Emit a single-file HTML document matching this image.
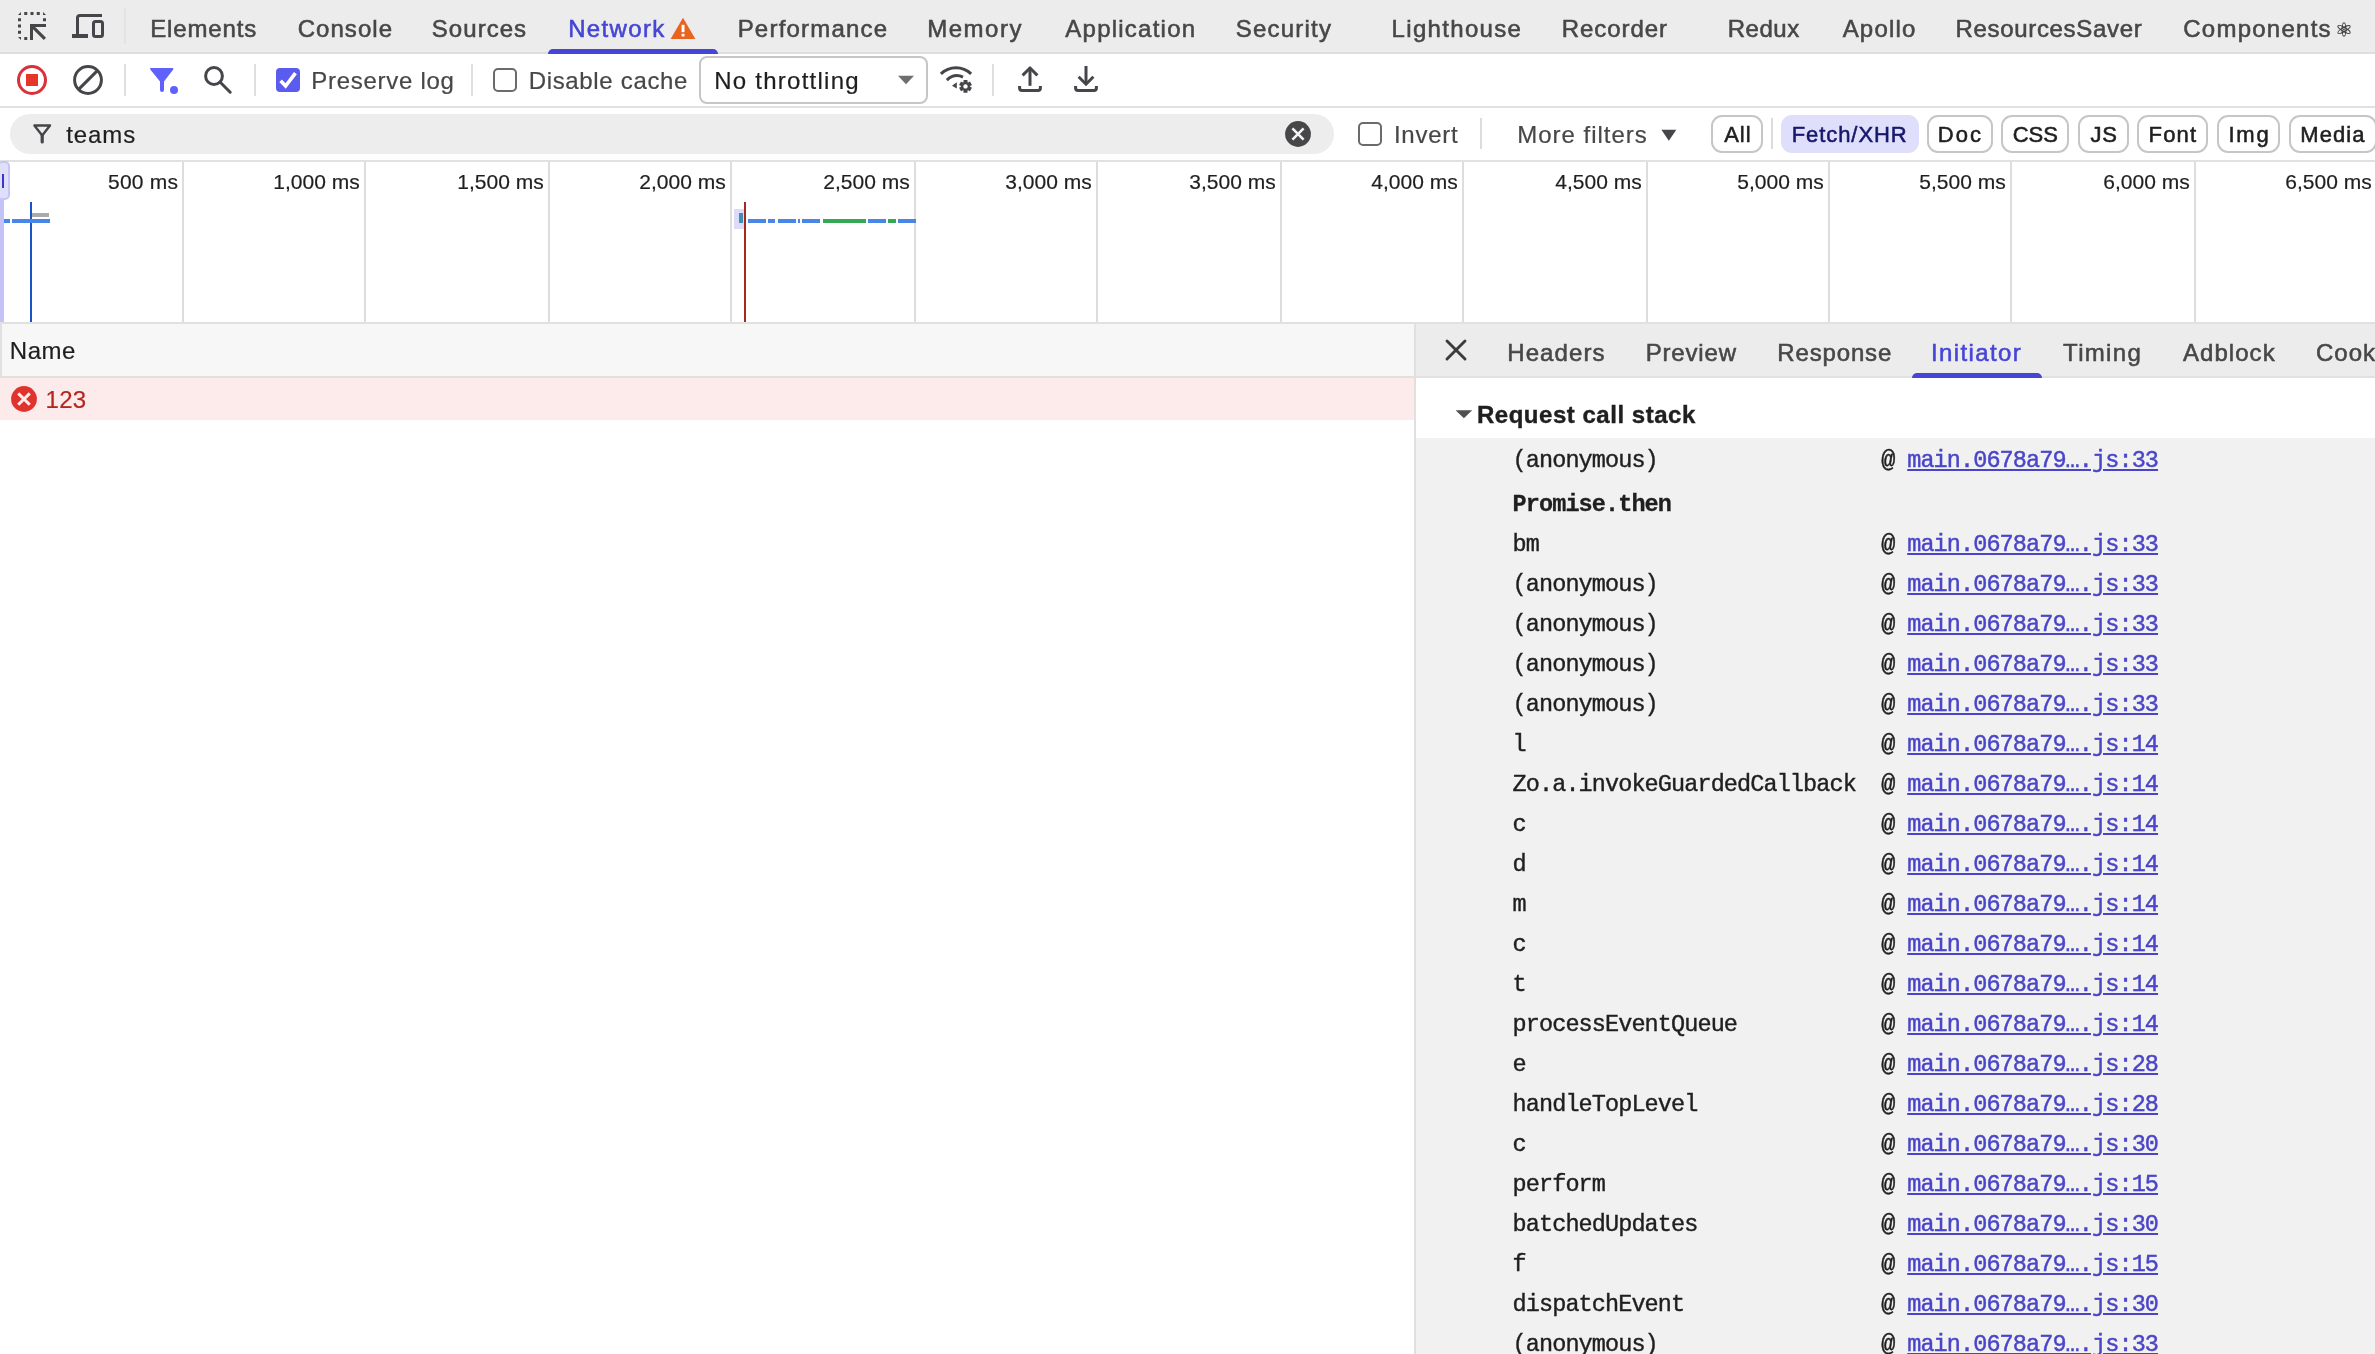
<!DOCTYPE html>
<html><head><meta charset="utf-8"><title>DevTools</title>
<style>
html,body{margin:0;padding:0;background:#fff;}
body{width:2375px;height:1354px;overflow:hidden;position:relative;font-family:"Liberation Sans",sans-serif;}
#root{position:absolute;left:0;top:0;width:2375px;height:1354px;overflow:hidden;will-change:transform;}
.t{position:absolute;white-space:pre;line-height:1;}
.b{position:absolute;box-sizing:border-box;}
a.t{text-decoration:none;}
</style></head><body><div id="root">
<div class="b" style="left:0px;top:0px;width:2375px;height:52px;background:#ececec;"></div>
<div class="b" style="left:0px;top:52px;width:2375px;height:2px;background:#dedede;"></div>
<div class="b" style="left:0px;top:106px;width:2375px;height:2px;background:#e1e1e1;"></div>
<div class="b" style="left:0px;top:160px;width:2375px;height:2px;background:#e1e1e1;"></div>
<span class="t" style="left:150.15px;top:17.00px;font-size:24px;color:#474747;letter-spacing:0.871px;-webkit-text-stroke:0.55px #474747;">Elements</span>
<span class="t" style="left:297.70px;top:17.00px;font-size:24px;color:#474747;letter-spacing:1.042px;-webkit-text-stroke:0.55px #474747;">Console</span>
<span class="t" style="left:431.80px;top:17.00px;font-size:24px;color:#474747;letter-spacing:1.042px;-webkit-text-stroke:0.55px #474747;">Sources</span>
<span class="t" style="left:737.65px;top:17.00px;font-size:24px;color:#474747;letter-spacing:1.215px;-webkit-text-stroke:0.55px #474747;">Performance</span>
<span class="t" style="left:927.25px;top:17.00px;font-size:24px;color:#474747;letter-spacing:1.500px;-webkit-text-stroke:0.55px #474747;">Memory</span>
<span class="t" style="left:1065.30px;top:17.00px;font-size:24px;color:#474747;letter-spacing:1.240px;-webkit-text-stroke:0.55px #474747;">Application</span>
<span class="t" style="left:1235.80px;top:17.00px;font-size:24px;color:#474747;letter-spacing:1.207px;-webkit-text-stroke:0.55px #474747;">Security</span>
<span class="t" style="left:1391.55px;top:17.00px;font-size:24px;color:#474747;letter-spacing:1.328px;-webkit-text-stroke:0.55px #474747;">Lighthouse</span>
<span class="t" style="left:1561.85px;top:17.00px;font-size:24px;color:#474747;letter-spacing:0.907px;-webkit-text-stroke:0.55px #474747;">Recorder</span>
<span class="t" style="left:1727.75px;top:17.00px;font-size:24px;color:#474747;letter-spacing:0.500px;-webkit-text-stroke:0.55px #474747;">Redux</span>
<span class="t" style="left:1842.70px;top:17.00px;font-size:24px;color:#474747;letter-spacing:1.170px;-webkit-text-stroke:0.55px #474747;">Apollo</span>
<span class="t" style="left:1955.55px;top:17.00px;font-size:24px;color:#474747;letter-spacing:0.669px;-webkit-text-stroke:0.55px #474747;">ResourcesSaver</span>
<span class="t" style="left:2183.20px;top:17.00px;font-size:24px;color:#474747;letter-spacing:1.261px;-webkit-text-stroke:0.55px #474747;">Components</span>
<span class="t" style="left:568.15px;top:17.00px;font-size:24px;color:#4545d6;letter-spacing:1.367px;-webkit-text-stroke:0.55px #4545d6;">Network</span>
<div class="b" style="left:548px;top:49px;width:170px;height:5px;background:#4545d6;border-radius:5px 5px 0 0;"></div>
<div class="b" style="left:124px;top:8px;width:2px;height:36px;background:#e3e3e3;"></div>
<div class="b" style="left:124px;top:64px;width:2px;height:32px;background:#dfdfdf;"></div>
<div class="b" style="left:254px;top:64px;width:2px;height:32px;background:#dfdfdf;"></div>
<div class="b" style="left:471px;top:64px;width:2px;height:32px;background:#dfdfdf;"></div>
<div class="b" style="left:992px;top:64px;width:2px;height:32px;background:#dfdfdf;"></div>
<span class="t" style="left:311.35px;top:69.00px;font-size:24px;color:#474747;letter-spacing:0.714px;-webkit-text-stroke:0.2px #474747;">Preserve log</span>
<span class="t" style="left:528.65px;top:69.00px;font-size:24px;color:#474747;letter-spacing:0.671px;-webkit-text-stroke:0.2px #474747;">Disable cache</span>
<div class="b" style="left:699px;top:56px;width:229px;height:48px;background:#fff;border:2px solid #c6c6c6;border-radius:8px;"></div>
<span class="t" style="left:714.25px;top:69.00px;font-size:24px;color:#1f1f1f;letter-spacing:1.246px;-webkit-text-stroke:0.2px #1f1f1f;">No throttling</span>
<div class="b" style="left:276px;top:68px;width:24px;height:24px;background:#5b5bf0;border-radius:4px;"></div>
<div class="b" style="left:493px;top:68px;width:24px;height:24px;background:#fff;border:2px solid #6b6b6b;border-radius:5px;"></div>
<div class="b" style="left:10px;top:114px;width:1324px;height:40px;background:#ededed;border-radius:20px;"></div>
<span class="t" style="left:66.15px;top:123.00px;font-size:24px;color:#1f1f1f;letter-spacing:0.938px;-webkit-text-stroke:0.2px #1f1f1f;">teams</span>
<div class="b" style="left:1357.5px;top:122px;width:24px;height:24px;background:#fff;border:2px solid #6b6b6b;border-radius:5px;"></div>
<span class="t" style="left:1393.90px;top:123.00px;font-size:24px;color:#474747;letter-spacing:0.750px;-webkit-text-stroke:0.2px #474747;">Invert</span>
<div class="b" style="left:1480px;top:118px;width:2px;height:31px;background:#dcdcdc;"></div>
<span class="t" style="left:1517.25px;top:123.00px;font-size:24px;color:#474747;letter-spacing:0.977px;-webkit-text-stroke:0.2px #474747;">More filters</span>
<div class="b" style="left:1771px;top:118px;width:2px;height:31px;background:#dcdcdc;"></div>
<div class="b" style="left:1711.4px;top:115px;width:51.19999999999982px;height:38px;background:#fff;border:2px solid #c6c6c6;border-radius:11px;"></div>
<span class="t" style="left:1724.20px;top:124.00px;font-size:22px;color:#1f1f1f;letter-spacing:1.000px;-webkit-text-stroke:0.55px #1f1f1f;">All</span>
<div class="b" style="left:1927.3px;top:115px;width:65.5px;height:38px;background:#fff;border:2px solid #c6c6c6;border-radius:11px;"></div>
<span class="t" style="left:1937.75px;top:124.00px;font-size:22px;color:#1f1f1f;letter-spacing:2.025px;-webkit-text-stroke:0.55px #1f1f1f;">Doc</span>
<div class="b" style="left:2001.3px;top:115px;width:68.10000000000014px;height:38px;background:#fff;border:2px solid #c6c6c6;border-radius:11px;"></div>
<span class="t" style="left:2012.80px;top:124.00px;font-size:22px;color:#1f1f1f;letter-spacing:-0.075px;-webkit-text-stroke:0.55px #1f1f1f;">CSS</span>
<div class="b" style="left:2078.3px;top:115px;width:50.29999999999973px;height:38px;background:#fff;border:2px solid #c6c6c6;border-radius:11px;"></div>
<span class="t" style="left:2090.55px;top:124.00px;font-size:22px;color:#1f1f1f;letter-spacing:0.800px;-webkit-text-stroke:0.55px #1f1f1f;">JS</span>
<div class="b" style="left:2137.2px;top:115px;width:71.20000000000027px;height:38px;background:#fff;border:2px solid #c6c6c6;border-radius:11px;"></div>
<span class="t" style="left:2148.45px;top:124.00px;font-size:22px;color:#1f1f1f;letter-spacing:1.250px;-webkit-text-stroke:0.55px #1f1f1f;">Font</span>
<div class="b" style="left:2217.3px;top:115px;width:62.899999999999636px;height:38px;background:#fff;border:2px solid #c6c6c6;border-radius:11px;"></div>
<span class="t" style="left:2228.40px;top:124.00px;font-size:22px;color:#1f1f1f;letter-spacing:1.800px;-webkit-text-stroke:0.55px #1f1f1f;">Img</span>
<div class="b" style="left:2289.1px;top:115px;width:88.40000000000009px;height:38px;background:#fff;border:2px solid #c6c6c6;border-radius:11px;"></div>
<span class="t" style="left:2300.25px;top:124.00px;font-size:22px;color:#1f1f1f;letter-spacing:1.062px;-webkit-text-stroke:0.55px #1f1f1f;">Media</span>
<div class="b" style="left:1781px;top:115px;width:138px;height:38px;background:#dfdffb;border-radius:11px;"></div>
<span class="t" style="left:1791.65px;top:124.00px;font-size:22px;color:#17176b;letter-spacing:0.938px;-webkit-text-stroke:0.55px #17176b;">Fetch/XHR</span>
<div class="b" style="left:182px;top:162px;width:2px;height:160px;background:#dddddd;"></div>
<div class="b" style="left:364px;top:162px;width:2px;height:160px;background:#dddddd;"></div>
<div class="b" style="left:548px;top:162px;width:2px;height:160px;background:#dddddd;"></div>
<div class="b" style="left:730px;top:162px;width:2px;height:160px;background:#dddddd;"></div>
<div class="b" style="left:914px;top:162px;width:2px;height:160px;background:#dddddd;"></div>
<div class="b" style="left:1096px;top:162px;width:2px;height:160px;background:#dddddd;"></div>
<div class="b" style="left:1280px;top:162px;width:2px;height:160px;background:#dddddd;"></div>
<div class="b" style="left:1462px;top:162px;width:2px;height:160px;background:#dddddd;"></div>
<div class="b" style="left:1646px;top:162px;width:2px;height:160px;background:#dddddd;"></div>
<div class="b" style="left:1828px;top:162px;width:2px;height:160px;background:#dddddd;"></div>
<div class="b" style="left:2010px;top:162px;width:2px;height:160px;background:#dddddd;"></div>
<div class="b" style="left:2194px;top:162px;width:2px;height:160px;background:#dddddd;"></div>
<span class="t" style="left:108.10px;top:171.00px;font-size:21px;color:#1f1f1f;letter-spacing:0.200px;-webkit-text-stroke:0.2px #1f1f1f;">500 ms</span>
<span class="t" style="left:273.35px;top:171.00px;font-size:21px;color:#1f1f1f;-webkit-text-stroke:0.2px #1f1f1f;">1,000 ms</span>
<span class="t" style="left:457.35px;top:171.00px;font-size:21px;color:#1f1f1f;-webkit-text-stroke:0.2px #1f1f1f;">1,500 ms</span>
<span class="t" style="left:639.35px;top:171.00px;font-size:21px;color:#1f1f1f;-webkit-text-stroke:0.2px #1f1f1f;">2,000 ms</span>
<span class="t" style="left:823.35px;top:171.00px;font-size:21px;color:#1f1f1f;-webkit-text-stroke:0.2px #1f1f1f;">2,500 ms</span>
<span class="t" style="left:1005.35px;top:171.00px;font-size:21px;color:#1f1f1f;-webkit-text-stroke:0.2px #1f1f1f;">3,000 ms</span>
<span class="t" style="left:1189.35px;top:171.00px;font-size:21px;color:#1f1f1f;-webkit-text-stroke:0.2px #1f1f1f;">3,500 ms</span>
<span class="t" style="left:1371.35px;top:171.00px;font-size:21px;color:#1f1f1f;-webkit-text-stroke:0.2px #1f1f1f;">4,000 ms</span>
<span class="t" style="left:1555.35px;top:171.00px;font-size:21px;color:#1f1f1f;-webkit-text-stroke:0.2px #1f1f1f;">4,500 ms</span>
<span class="t" style="left:1737.35px;top:171.00px;font-size:21px;color:#1f1f1f;-webkit-text-stroke:0.2px #1f1f1f;">5,000 ms</span>
<span class="t" style="left:1919.35px;top:171.00px;font-size:21px;color:#1f1f1f;-webkit-text-stroke:0.2px #1f1f1f;">5,500 ms</span>
<span class="t" style="left:2103.35px;top:171.00px;font-size:21px;color:#1f1f1f;-webkit-text-stroke:0.2px #1f1f1f;">6,000 ms</span>
<span class="t" style="left:2285.35px;top:171.00px;font-size:21px;color:#1f1f1f;-webkit-text-stroke:0.2px #1f1f1f;">6,500 ms</span>
<div class="b" style="left:0px;top:322px;width:2375px;height:2px;background:#e1e1e1;"></div>
<div class="b" style="left:0px;top:162px;width:4px;height:160px;background:#c3c3f7;"></div>
<div class="b" style="left:-3px;top:161px;width:13px;height:39px;background:#dfdffb;border:2px solid #c6c6f6;border-radius:5px;"></div>
<div class="b" style="left:2px;top:174px;width:2px;height:14px;background:#3f35c8;"></div>
<div class="b" style="left:30px;top:202px;width:2px;height:120px;background:#1a53c6;"></div>
<div class="b" style="left:32px;top:213px;width:17px;height:4px;background:#aaaaaa;"></div>
<div class="b" style="left:4px;top:219px;width:6px;height:4px;background:#4a86e8;"></div>
<div class="b" style="left:12px;top:219px;width:38px;height:4px;background:#4a86e8;"></div>
<div class="b" style="left:734px;top:209px;width:10px;height:20px;background:#dcdcf8;"></div>
<div class="b" style="left:739px;top:213px;width:4px;height:10px;background:#3d8fb5;"></div>
<div class="b" style="left:744px;top:202px;width:2px;height:120px;background:#a52a1e;"></div>
<div class="b" style="left:748.0px;top:219px;width:18.0px;height:4px;background:#4a86e8;"></div>
<div class="b" style="left:768.0px;top:219px;width:6.5px;height:4px;background:#4a86e8;"></div>
<div class="b" style="left:777.5px;top:219px;width:18.0px;height:4px;background:#4a86e8;"></div>
<div class="b" style="left:797.5px;top:219px;width:2.0px;height:4px;background:#4a86e8;"></div>
<div class="b" style="left:802.0px;top:219px;width:18.0px;height:4px;background:#4a86e8;"></div>
<div class="b" style="left:823.0px;top:219px;width:43.0px;height:4px;background:#34a853;"></div>
<div class="b" style="left:868.0px;top:219px;width:18.0px;height:4px;background:#4a86e8;"></div>
<div class="b" style="left:888.0px;top:219px;width:8.0px;height:4px;background:#34a853;"></div>
<div class="b" style="left:898.0px;top:219px;width:18.0px;height:4px;background:#4a86e8;"></div>
<div class="b" style="left:0px;top:324px;width:1414px;height:52px;background:#f7f7f7;"></div>
<div class="b" style="left:0px;top:322px;width:2px;height:56px;background:#e1e1e1;"></div>
<div class="b" style="left:0px;top:376px;width:1414px;height:2px;background:#e0e0e0;"></div>
<span class="t" style="left:9.85px;top:339.00px;font-size:24px;color:#1f1f1f;letter-spacing:0.467px;-webkit-text-stroke:0.2px #1f1f1f;">Name</span>
<div class="b" style="left:0px;top:378px;width:1414px;height:42px;background:#fdeaea;"></div>
<span class="t" style="left:45.45px;top:388.00px;font-size:24px;color:#b3261e;letter-spacing:0.350px;-webkit-text-stroke:0.2px #b3261e;">123</span>
<div class="b" style="left:1414px;top:324px;width:2px;height:1030px;background:#e0e0e0;"></div>
<div class="b" style="left:1416px;top:324px;width:959px;height:53px;background:#ececec;"></div>
<div class="b" style="left:1416px;top:376px;width:959px;height:2px;background:#e1e1e1;"></div>
<span class="t" style="left:1507.25px;top:341.00px;font-size:24px;color:#474747;letter-spacing:1.092px;-webkit-text-stroke:0.55px #474747;">Headers</span>
<span class="t" style="left:1645.65px;top:341.00px;font-size:24px;color:#474747;letter-spacing:0.842px;-webkit-text-stroke:0.55px #474747;">Preview</span>
<span class="t" style="left:1777.25px;top:341.00px;font-size:24px;color:#474747;letter-spacing:0.857px;-webkit-text-stroke:0.55px #474747;">Response</span>
<span class="t" style="left:2063.10px;top:341.00px;font-size:24px;color:#474747;letter-spacing:1.310px;-webkit-text-stroke:0.55px #474747;">Timing</span>
<span class="t" style="left:2183.00px;top:341.00px;font-size:24px;color:#474747;letter-spacing:1.042px;-webkit-text-stroke:0.55px #474747;">Adblock</span>
<span class="t" style="left:2316.00px;top:341.00px;font-size:24px;color:#474747;-webkit-text-stroke:0.55px #474747;letter-spacing:1px;">Cookies</span>
<span class="t" style="left:1931.00px;top:341.00px;font-size:24px;color:#4545d6;letter-spacing:1.387px;-webkit-text-stroke:0.55px #4545d6;">Initiator</span>
<div class="b" style="left:1912px;top:373px;width:130px;height:5px;background:#4545d6;border-radius:5px 5px 0 0;"></div>
<span class="t" style="left:1476.90px;top:403.00px;font-size:24px;color:#1f1f1f;letter-spacing:0.529px;font-weight:bold;-webkit-text-stroke:0.4px #1f1f1f;">Request call stack</span>
<div class="b" style="left:1416px;top:438px;width:959px;height:916px;background:#f1f1f1;"></div>
<span class="t" style="left:1512.6px;top:449.00px;font-size:23.5px;color:#1f1f1f;font-family:'Liberation Mono',monospace;letter-spacing:-0.9px;-webkit-text-stroke:0.4px #1f1f1f;">(anonymous)</span>
<span class="t" style="left:1881.2px;top:449.00px;font-size:23.5px;color:#1f1f1f;font-family:'Liberation Mono',monospace;letter-spacing:-0.9px;-webkit-text-stroke:0.45px #1f1f1f;">@</span>
<span class="t" style="left:1907.2px;top:449.00px;font-size:23.5px;color:#4a45c8;font-family:'Liberation Mono',monospace;letter-spacing:-0.9px;-webkit-text-stroke:0.45px #4a45c8;text-decoration:underline;text-decoration-thickness:1.6px;text-underline-offset:2px;">main.0678a79….js:33</span>
<span class="t" style="left:1512.6px;top:493.00px;font-size:23.5px;color:#1f1f1f;font-family:'Liberation Mono',monospace;letter-spacing:-0.9px;font-weight:bold;-webkit-text-stroke:0.3px #1f1f1f;">Promise.then</span>
<span class="t" style="left:1512.6px;top:533.00px;font-size:23.5px;color:#1f1f1f;font-family:'Liberation Mono',monospace;letter-spacing:-0.9px;-webkit-text-stroke:0.4px #1f1f1f;">bm</span>
<span class="t" style="left:1881.2px;top:533.00px;font-size:23.5px;color:#1f1f1f;font-family:'Liberation Mono',monospace;letter-spacing:-0.9px;-webkit-text-stroke:0.45px #1f1f1f;">@</span>
<span class="t" style="left:1907.2px;top:533.00px;font-size:23.5px;color:#4a45c8;font-family:'Liberation Mono',monospace;letter-spacing:-0.9px;-webkit-text-stroke:0.45px #4a45c8;text-decoration:underline;text-decoration-thickness:1.6px;text-underline-offset:2px;">main.0678a79….js:33</span>
<span class="t" style="left:1512.6px;top:573.00px;font-size:23.5px;color:#1f1f1f;font-family:'Liberation Mono',monospace;letter-spacing:-0.9px;-webkit-text-stroke:0.4px #1f1f1f;">(anonymous)</span>
<span class="t" style="left:1881.2px;top:573.00px;font-size:23.5px;color:#1f1f1f;font-family:'Liberation Mono',monospace;letter-spacing:-0.9px;-webkit-text-stroke:0.45px #1f1f1f;">@</span>
<span class="t" style="left:1907.2px;top:573.00px;font-size:23.5px;color:#4a45c8;font-family:'Liberation Mono',monospace;letter-spacing:-0.9px;-webkit-text-stroke:0.45px #4a45c8;text-decoration:underline;text-decoration-thickness:1.6px;text-underline-offset:2px;">main.0678a79….js:33</span>
<span class="t" style="left:1512.6px;top:613.00px;font-size:23.5px;color:#1f1f1f;font-family:'Liberation Mono',monospace;letter-spacing:-0.9px;-webkit-text-stroke:0.4px #1f1f1f;">(anonymous)</span>
<span class="t" style="left:1881.2px;top:613.00px;font-size:23.5px;color:#1f1f1f;font-family:'Liberation Mono',monospace;letter-spacing:-0.9px;-webkit-text-stroke:0.45px #1f1f1f;">@</span>
<span class="t" style="left:1907.2px;top:613.00px;font-size:23.5px;color:#4a45c8;font-family:'Liberation Mono',monospace;letter-spacing:-0.9px;-webkit-text-stroke:0.45px #4a45c8;text-decoration:underline;text-decoration-thickness:1.6px;text-underline-offset:2px;">main.0678a79….js:33</span>
<span class="t" style="left:1512.6px;top:653.00px;font-size:23.5px;color:#1f1f1f;font-family:'Liberation Mono',monospace;letter-spacing:-0.9px;-webkit-text-stroke:0.4px #1f1f1f;">(anonymous)</span>
<span class="t" style="left:1881.2px;top:653.00px;font-size:23.5px;color:#1f1f1f;font-family:'Liberation Mono',monospace;letter-spacing:-0.9px;-webkit-text-stroke:0.45px #1f1f1f;">@</span>
<span class="t" style="left:1907.2px;top:653.00px;font-size:23.5px;color:#4a45c8;font-family:'Liberation Mono',monospace;letter-spacing:-0.9px;-webkit-text-stroke:0.45px #4a45c8;text-decoration:underline;text-decoration-thickness:1.6px;text-underline-offset:2px;">main.0678a79….js:33</span>
<span class="t" style="left:1512.6px;top:693.00px;font-size:23.5px;color:#1f1f1f;font-family:'Liberation Mono',monospace;letter-spacing:-0.9px;-webkit-text-stroke:0.4px #1f1f1f;">(anonymous)</span>
<span class="t" style="left:1881.2px;top:693.00px;font-size:23.5px;color:#1f1f1f;font-family:'Liberation Mono',monospace;letter-spacing:-0.9px;-webkit-text-stroke:0.45px #1f1f1f;">@</span>
<span class="t" style="left:1907.2px;top:693.00px;font-size:23.5px;color:#4a45c8;font-family:'Liberation Mono',monospace;letter-spacing:-0.9px;-webkit-text-stroke:0.45px #4a45c8;text-decoration:underline;text-decoration-thickness:1.6px;text-underline-offset:2px;">main.0678a79….js:33</span>
<span class="t" style="left:1512.6px;top:733.00px;font-size:23.5px;color:#1f1f1f;font-family:'Liberation Mono',monospace;letter-spacing:-0.9px;-webkit-text-stroke:0.4px #1f1f1f;">l</span>
<span class="t" style="left:1881.2px;top:733.00px;font-size:23.5px;color:#1f1f1f;font-family:'Liberation Mono',monospace;letter-spacing:-0.9px;-webkit-text-stroke:0.45px #1f1f1f;">@</span>
<span class="t" style="left:1907.2px;top:733.00px;font-size:23.5px;color:#4a45c8;font-family:'Liberation Mono',monospace;letter-spacing:-0.9px;-webkit-text-stroke:0.45px #4a45c8;text-decoration:underline;text-decoration-thickness:1.6px;text-underline-offset:2px;">main.0678a79….js:14</span>
<span class="t" style="left:1512.6px;top:773.00px;font-size:23.5px;color:#1f1f1f;font-family:'Liberation Mono',monospace;letter-spacing:-0.9px;-webkit-text-stroke:0.4px #1f1f1f;">Zo.a.invokeGuardedCallback</span>
<span class="t" style="left:1881.2px;top:773.00px;font-size:23.5px;color:#1f1f1f;font-family:'Liberation Mono',monospace;letter-spacing:-0.9px;-webkit-text-stroke:0.45px #1f1f1f;">@</span>
<span class="t" style="left:1907.2px;top:773.00px;font-size:23.5px;color:#4a45c8;font-family:'Liberation Mono',monospace;letter-spacing:-0.9px;-webkit-text-stroke:0.45px #4a45c8;text-decoration:underline;text-decoration-thickness:1.6px;text-underline-offset:2px;">main.0678a79….js:14</span>
<span class="t" style="left:1512.6px;top:813.00px;font-size:23.5px;color:#1f1f1f;font-family:'Liberation Mono',monospace;letter-spacing:-0.9px;-webkit-text-stroke:0.4px #1f1f1f;">c</span>
<span class="t" style="left:1881.2px;top:813.00px;font-size:23.5px;color:#1f1f1f;font-family:'Liberation Mono',monospace;letter-spacing:-0.9px;-webkit-text-stroke:0.45px #1f1f1f;">@</span>
<span class="t" style="left:1907.2px;top:813.00px;font-size:23.5px;color:#4a45c8;font-family:'Liberation Mono',monospace;letter-spacing:-0.9px;-webkit-text-stroke:0.45px #4a45c8;text-decoration:underline;text-decoration-thickness:1.6px;text-underline-offset:2px;">main.0678a79….js:14</span>
<span class="t" style="left:1512.6px;top:853.00px;font-size:23.5px;color:#1f1f1f;font-family:'Liberation Mono',monospace;letter-spacing:-0.9px;-webkit-text-stroke:0.4px #1f1f1f;">d</span>
<span class="t" style="left:1881.2px;top:853.00px;font-size:23.5px;color:#1f1f1f;font-family:'Liberation Mono',monospace;letter-spacing:-0.9px;-webkit-text-stroke:0.45px #1f1f1f;">@</span>
<span class="t" style="left:1907.2px;top:853.00px;font-size:23.5px;color:#4a45c8;font-family:'Liberation Mono',monospace;letter-spacing:-0.9px;-webkit-text-stroke:0.45px #4a45c8;text-decoration:underline;text-decoration-thickness:1.6px;text-underline-offset:2px;">main.0678a79….js:14</span>
<span class="t" style="left:1512.6px;top:893.00px;font-size:23.5px;color:#1f1f1f;font-family:'Liberation Mono',monospace;letter-spacing:-0.9px;-webkit-text-stroke:0.4px #1f1f1f;">m</span>
<span class="t" style="left:1881.2px;top:893.00px;font-size:23.5px;color:#1f1f1f;font-family:'Liberation Mono',monospace;letter-spacing:-0.9px;-webkit-text-stroke:0.45px #1f1f1f;">@</span>
<span class="t" style="left:1907.2px;top:893.00px;font-size:23.5px;color:#4a45c8;font-family:'Liberation Mono',monospace;letter-spacing:-0.9px;-webkit-text-stroke:0.45px #4a45c8;text-decoration:underline;text-decoration-thickness:1.6px;text-underline-offset:2px;">main.0678a79….js:14</span>
<span class="t" style="left:1512.6px;top:933.00px;font-size:23.5px;color:#1f1f1f;font-family:'Liberation Mono',monospace;letter-spacing:-0.9px;-webkit-text-stroke:0.4px #1f1f1f;">c</span>
<span class="t" style="left:1881.2px;top:933.00px;font-size:23.5px;color:#1f1f1f;font-family:'Liberation Mono',monospace;letter-spacing:-0.9px;-webkit-text-stroke:0.45px #1f1f1f;">@</span>
<span class="t" style="left:1907.2px;top:933.00px;font-size:23.5px;color:#4a45c8;font-family:'Liberation Mono',monospace;letter-spacing:-0.9px;-webkit-text-stroke:0.45px #4a45c8;text-decoration:underline;text-decoration-thickness:1.6px;text-underline-offset:2px;">main.0678a79….js:14</span>
<span class="t" style="left:1512.6px;top:973.00px;font-size:23.5px;color:#1f1f1f;font-family:'Liberation Mono',monospace;letter-spacing:-0.9px;-webkit-text-stroke:0.4px #1f1f1f;">t</span>
<span class="t" style="left:1881.2px;top:973.00px;font-size:23.5px;color:#1f1f1f;font-family:'Liberation Mono',monospace;letter-spacing:-0.9px;-webkit-text-stroke:0.45px #1f1f1f;">@</span>
<span class="t" style="left:1907.2px;top:973.00px;font-size:23.5px;color:#4a45c8;font-family:'Liberation Mono',monospace;letter-spacing:-0.9px;-webkit-text-stroke:0.45px #4a45c8;text-decoration:underline;text-decoration-thickness:1.6px;text-underline-offset:2px;">main.0678a79….js:14</span>
<span class="t" style="left:1512.6px;top:1013.00px;font-size:23.5px;color:#1f1f1f;font-family:'Liberation Mono',monospace;letter-spacing:-0.9px;-webkit-text-stroke:0.4px #1f1f1f;">processEventQueue</span>
<span class="t" style="left:1881.2px;top:1013.00px;font-size:23.5px;color:#1f1f1f;font-family:'Liberation Mono',monospace;letter-spacing:-0.9px;-webkit-text-stroke:0.45px #1f1f1f;">@</span>
<span class="t" style="left:1907.2px;top:1013.00px;font-size:23.5px;color:#4a45c8;font-family:'Liberation Mono',monospace;letter-spacing:-0.9px;-webkit-text-stroke:0.45px #4a45c8;text-decoration:underline;text-decoration-thickness:1.6px;text-underline-offset:2px;">main.0678a79….js:14</span>
<span class="t" style="left:1512.6px;top:1053.00px;font-size:23.5px;color:#1f1f1f;font-family:'Liberation Mono',monospace;letter-spacing:-0.9px;-webkit-text-stroke:0.4px #1f1f1f;">e</span>
<span class="t" style="left:1881.2px;top:1053.00px;font-size:23.5px;color:#1f1f1f;font-family:'Liberation Mono',monospace;letter-spacing:-0.9px;-webkit-text-stroke:0.45px #1f1f1f;">@</span>
<span class="t" style="left:1907.2px;top:1053.00px;font-size:23.5px;color:#4a45c8;font-family:'Liberation Mono',monospace;letter-spacing:-0.9px;-webkit-text-stroke:0.45px #4a45c8;text-decoration:underline;text-decoration-thickness:1.6px;text-underline-offset:2px;">main.0678a79….js:28</span>
<span class="t" style="left:1512.6px;top:1093.00px;font-size:23.5px;color:#1f1f1f;font-family:'Liberation Mono',monospace;letter-spacing:-0.9px;-webkit-text-stroke:0.4px #1f1f1f;">handleTopLevel</span>
<span class="t" style="left:1881.2px;top:1093.00px;font-size:23.5px;color:#1f1f1f;font-family:'Liberation Mono',monospace;letter-spacing:-0.9px;-webkit-text-stroke:0.45px #1f1f1f;">@</span>
<span class="t" style="left:1907.2px;top:1093.00px;font-size:23.5px;color:#4a45c8;font-family:'Liberation Mono',monospace;letter-spacing:-0.9px;-webkit-text-stroke:0.45px #4a45c8;text-decoration:underline;text-decoration-thickness:1.6px;text-underline-offset:2px;">main.0678a79….js:28</span>
<span class="t" style="left:1512.6px;top:1133.00px;font-size:23.5px;color:#1f1f1f;font-family:'Liberation Mono',monospace;letter-spacing:-0.9px;-webkit-text-stroke:0.4px #1f1f1f;">c</span>
<span class="t" style="left:1881.2px;top:1133.00px;font-size:23.5px;color:#1f1f1f;font-family:'Liberation Mono',monospace;letter-spacing:-0.9px;-webkit-text-stroke:0.45px #1f1f1f;">@</span>
<span class="t" style="left:1907.2px;top:1133.00px;font-size:23.5px;color:#4a45c8;font-family:'Liberation Mono',monospace;letter-spacing:-0.9px;-webkit-text-stroke:0.45px #4a45c8;text-decoration:underline;text-decoration-thickness:1.6px;text-underline-offset:2px;">main.0678a79….js:30</span>
<span class="t" style="left:1512.6px;top:1173.00px;font-size:23.5px;color:#1f1f1f;font-family:'Liberation Mono',monospace;letter-spacing:-0.9px;-webkit-text-stroke:0.4px #1f1f1f;">perform</span>
<span class="t" style="left:1881.2px;top:1173.00px;font-size:23.5px;color:#1f1f1f;font-family:'Liberation Mono',monospace;letter-spacing:-0.9px;-webkit-text-stroke:0.45px #1f1f1f;">@</span>
<span class="t" style="left:1907.2px;top:1173.00px;font-size:23.5px;color:#4a45c8;font-family:'Liberation Mono',monospace;letter-spacing:-0.9px;-webkit-text-stroke:0.45px #4a45c8;text-decoration:underline;text-decoration-thickness:1.6px;text-underline-offset:2px;">main.0678a79….js:15</span>
<span class="t" style="left:1512.6px;top:1213.00px;font-size:23.5px;color:#1f1f1f;font-family:'Liberation Mono',monospace;letter-spacing:-0.9px;-webkit-text-stroke:0.4px #1f1f1f;">batchedUpdates</span>
<span class="t" style="left:1881.2px;top:1213.00px;font-size:23.5px;color:#1f1f1f;font-family:'Liberation Mono',monospace;letter-spacing:-0.9px;-webkit-text-stroke:0.45px #1f1f1f;">@</span>
<span class="t" style="left:1907.2px;top:1213.00px;font-size:23.5px;color:#4a45c8;font-family:'Liberation Mono',monospace;letter-spacing:-0.9px;-webkit-text-stroke:0.45px #4a45c8;text-decoration:underline;text-decoration-thickness:1.6px;text-underline-offset:2px;">main.0678a79….js:30</span>
<span class="t" style="left:1512.6px;top:1253.00px;font-size:23.5px;color:#1f1f1f;font-family:'Liberation Mono',monospace;letter-spacing:-0.9px;-webkit-text-stroke:0.4px #1f1f1f;">f</span>
<span class="t" style="left:1881.2px;top:1253.00px;font-size:23.5px;color:#1f1f1f;font-family:'Liberation Mono',monospace;letter-spacing:-0.9px;-webkit-text-stroke:0.45px #1f1f1f;">@</span>
<span class="t" style="left:1907.2px;top:1253.00px;font-size:23.5px;color:#4a45c8;font-family:'Liberation Mono',monospace;letter-spacing:-0.9px;-webkit-text-stroke:0.45px #4a45c8;text-decoration:underline;text-decoration-thickness:1.6px;text-underline-offset:2px;">main.0678a79….js:15</span>
<span class="t" style="left:1512.6px;top:1293.00px;font-size:23.5px;color:#1f1f1f;font-family:'Liberation Mono',monospace;letter-spacing:-0.9px;-webkit-text-stroke:0.4px #1f1f1f;">dispatchEvent</span>
<span class="t" style="left:1881.2px;top:1293.00px;font-size:23.5px;color:#1f1f1f;font-family:'Liberation Mono',monospace;letter-spacing:-0.9px;-webkit-text-stroke:0.45px #1f1f1f;">@</span>
<span class="t" style="left:1907.2px;top:1293.00px;font-size:23.5px;color:#4a45c8;font-family:'Liberation Mono',monospace;letter-spacing:-0.9px;-webkit-text-stroke:0.45px #4a45c8;text-decoration:underline;text-decoration-thickness:1.6px;text-underline-offset:2px;">main.0678a79….js:30</span>
<span class="t" style="left:1512.6px;top:1333.00px;font-size:23.5px;color:#1f1f1f;font-family:'Liberation Mono',monospace;letter-spacing:-0.9px;-webkit-text-stroke:0.4px #1f1f1f;">(anonymous)</span>
<span class="t" style="left:1881.2px;top:1333.00px;font-size:23.5px;color:#1f1f1f;font-family:'Liberation Mono',monospace;letter-spacing:-0.9px;-webkit-text-stroke:0.45px #1f1f1f;">@</span>
<span class="t" style="left:1907.2px;top:1333.00px;font-size:23.5px;color:#4a45c8;font-family:'Liberation Mono',monospace;letter-spacing:-0.9px;-webkit-text-stroke:0.45px #4a45c8;text-decoration:underline;text-decoration-thickness:1.6px;text-underline-offset:2px;">main.0678a79….js:33</span>
<svg class="b" style="left:18px;top:12px;" width="28" height="28" viewBox="0 0 28 28"><g fill="#46464a"><rect x="6.25" y="0" width="3" height="3"/><rect x="12.5" y="0" width="3" height="3"/><rect x="18.75" y="0" width="3" height="3"/><path d="M0 3 L3 0 L3 3Z"/><path d="M25 0 L28 3 L25 3Z"/><path d="M0 25 L3 25 L3 28Z"/><rect x="0" y="6.25" width="3" height="3"/><rect x="0" y="12.5" width="3" height="3"/><rect x="0" y="18.75" width="3" height="3"/><rect x="25" y="6.25" width="3" height="3"/><rect x="6.25" y="25" width="3" height="3"/><path d="M12 28 V12 H28 V15 H17.2 L28 25.8 L25.8 28 L15 17.2 V28Z"/></g></svg>
<svg class="b" style="left:72px;top:14px;" width="32" height="24" viewBox="0 0 32 24"><path d="M30 1.5 H8 Q5.5 1.5 5.5 4 V21" fill="none" stroke="#46464a" stroke-width="3"/><rect x="0" y="20" width="16" height="4" fill="#46464a"/><rect x="21.5" y="7.5" width="9" height="15" rx="2" fill="none" stroke="#46464a" stroke-width="3"/></svg>
<svg class="b" style="left:670px;top:17px;" width="26" height="23" viewBox="0 0 26 23"><path d="M13 0.7 L25.4 22 H0.6Z" fill="#e8641f"/><rect x="11.6" y="7.8" width="2.9" height="7.4" fill="#fff"/><rect x="11.6" y="16.8" width="2.9" height="2.7" fill="#fff"/></svg>
<svg class="b" style="left:2336.4px;top:21px;" width="16" height="17" viewBox="0 0 16 17"><g fill="none" stroke="#3a3a3a" stroke-width="0.95"><ellipse cx="8" cy="8.5" rx="2.0" ry="7.0"/><ellipse cx="8" cy="8.5" rx="2.0" ry="7.0" transform="rotate(60 8 8.5)"/><ellipse cx="8" cy="8.5" rx="2.0" ry="7.0" transform="rotate(-60 8 8.5)"/></g><circle cx="8" cy="8.5" r="0.9" fill="#3a3a3a"/></svg>
<svg class="b" style="left:16px;top:64px;" width="32" height="32" viewBox="0 0 32 32"><circle cx="16" cy="16" r="13.5" fill="none" stroke="#d9303a" stroke-width="3"/><rect x="10" y="10" width="12" height="12" fill="#e6352b"/></svg>
<svg class="b" style="left:72px;top:64px;" width="32" height="32" viewBox="0 0 32 32"><circle cx="16" cy="16" r="13.4" fill="none" stroke="#46464a" stroke-width="3"/><path d="M6.6 25.4 L25.4 6.6" stroke="#46464a" stroke-width="3"/></svg>
<svg class="b" style="left:148px;top:66px;" width="34" height="30" viewBox="0 0 34 30"><path d="M3 2 H24.5 Q26.2 2 25.2 3.6 L16 15.5 V24 Q16 26 14 26 Q12 26 12 24 V15.5 L2.3 3.6 Q1.3 2 3 2Z" fill="#6060fa"/><circle cx="26" cy="24" r="4" fill="#6060fa"/></svg>
<svg class="b" style="left:200px;top:62px;" width="36" height="36" viewBox="0 0 36 36"><circle cx="14" cy="14" r="8.4" fill="none" stroke="#46464a" stroke-width="3"/><path d="M20 20 L30.2 30.2" stroke="#46464a" stroke-width="3" stroke-linecap="round"/></svg>
<svg class="b" style="left:276px;top:68px;" width="24" height="24" viewBox="0 0 24 24"><path d="M4.6 12.8 L9.6 18 L19.4 5.2" fill="none" stroke="#fff" stroke-width="3.6"/></svg>
<svg class="b" style="left:897px;top:75px;" width="18" height="10" viewBox="0 0 18 10"><path d="M1 0.8 H17 L9 9.2Z" fill="#6e6e6e"/></svg>
<svg class="b" style="left:938px;top:64px;" width="36" height="32" viewBox="0 0 36 32"><g fill="none" stroke="#46464a" stroke-width="3"><path d="M2.9 9.9 A21.75 21.75 0 0 1 33.1 9.9"/><path d="M8.8 16.2 Q16.5 8.8 25 13.2"/></g><path d="M14 21.8 L18.8 18.2 V24.4Z" fill="#46464a"/><path d="M25.55 16.09 L29.45 16.09 L29.54 18.28 L30.05 18.57 L31.99 17.56 L33.94 20.94 L32.09 22.11 L32.09 22.69 L33.94 23.86 L31.99 27.24 L30.05 26.23 L29.54 26.52 L29.45 28.71 L25.55 28.71 L25.46 26.52 L24.95 26.23 L23.01 27.24 L21.06 23.86 L22.91 22.69 L22.91 22.11 L21.06 20.94 L23.01 17.56 L24.95 18.57 L25.46 18.28Z M29.7 22.4 A2.2 2.2 0 1 0 25.3 22.4 A2.2 2.2 0 1 0 29.7 22.4Z" fill="#46464a" fill-rule="evenodd"/></svg>
<svg class="b" style="left:1016px;top:64px;" width="28" height="30" viewBox="0 0 28 30"><g fill="none" stroke="#46464a" stroke-width="3"><path d="M14 21.8 V3.6"/><path d="M6.6 11.4 L14 4 L21.4 11.4"/><path d="M3.6 22 V24 Q3.6 26.4 6 26.4 H22 Q24.4 26.4 24.4 24 V22"/></g></svg>
<svg class="b" style="left:1072px;top:64px;" width="28" height="30" viewBox="0 0 28 30"><g fill="none" stroke="#46464a" stroke-width="3"><path d="M14 2 V19.6"/><path d="M6.6 12.8 L14 20.2 L21.4 12.8"/><path d="M3.6 22 V24 Q3.6 26.4 6 26.4 H22 Q24.4 26.4 24.4 24 V22"/></g></svg>
<svg class="b" style="left:30px;top:122px;" width="24" height="24" viewBox="0 0 24 24"><path d="M4.4 3.5 H20 L12.2 13.4Z" fill="none" stroke="#46464a" stroke-width="2.4" stroke-linejoin="round"/><path d="M12.2 13 V20" stroke="#46464a" stroke-width="3.2" stroke-linecap="round"/></svg>
<svg class="b" style="left:1285px;top:121px;" width="26" height="26" viewBox="0 0 26 26"><circle cx="13" cy="13" r="12.9" fill="#47474a"/><path d="M7.4 7.4 L18.6 18.6 M18.6 7.4 L7.4 18.6" stroke="#f3f3f3" stroke-width="2.6"/></svg>
<svg class="b" style="left:1661px;top:129px;" width="16" height="13" viewBox="0 0 16 13"><path d="M0.4 0.8 H15.3 L7.85 11.8Z" fill="#45454a"/></svg>
<svg class="b" style="left:11px;top:386px;" width="26" height="26" viewBox="0 0 26 26"><circle cx="13" cy="13" r="12.9" fill="#e0332e"/><path d="M7.2 7.4 L18.8 18.8 M18.8 7.4 L7.2 18.8" stroke="#fdecec" stroke-width="3"/></svg>
<svg class="b" style="left:1444px;top:338px;" width="24" height="24" viewBox="0 0 24 24"><path d="M3 3 L21 21 M21 3 L3 21" stroke="#3c3c40" stroke-width="2.9" stroke-linecap="round"/></svg>
<svg class="b" style="left:1455px;top:410px;" width="18" height="9" viewBox="0 0 18 9"><path d="M0.6 0.3 H17.2 L8.9 8.2Z" fill="#505050"/></svg>
</div></body></html>
